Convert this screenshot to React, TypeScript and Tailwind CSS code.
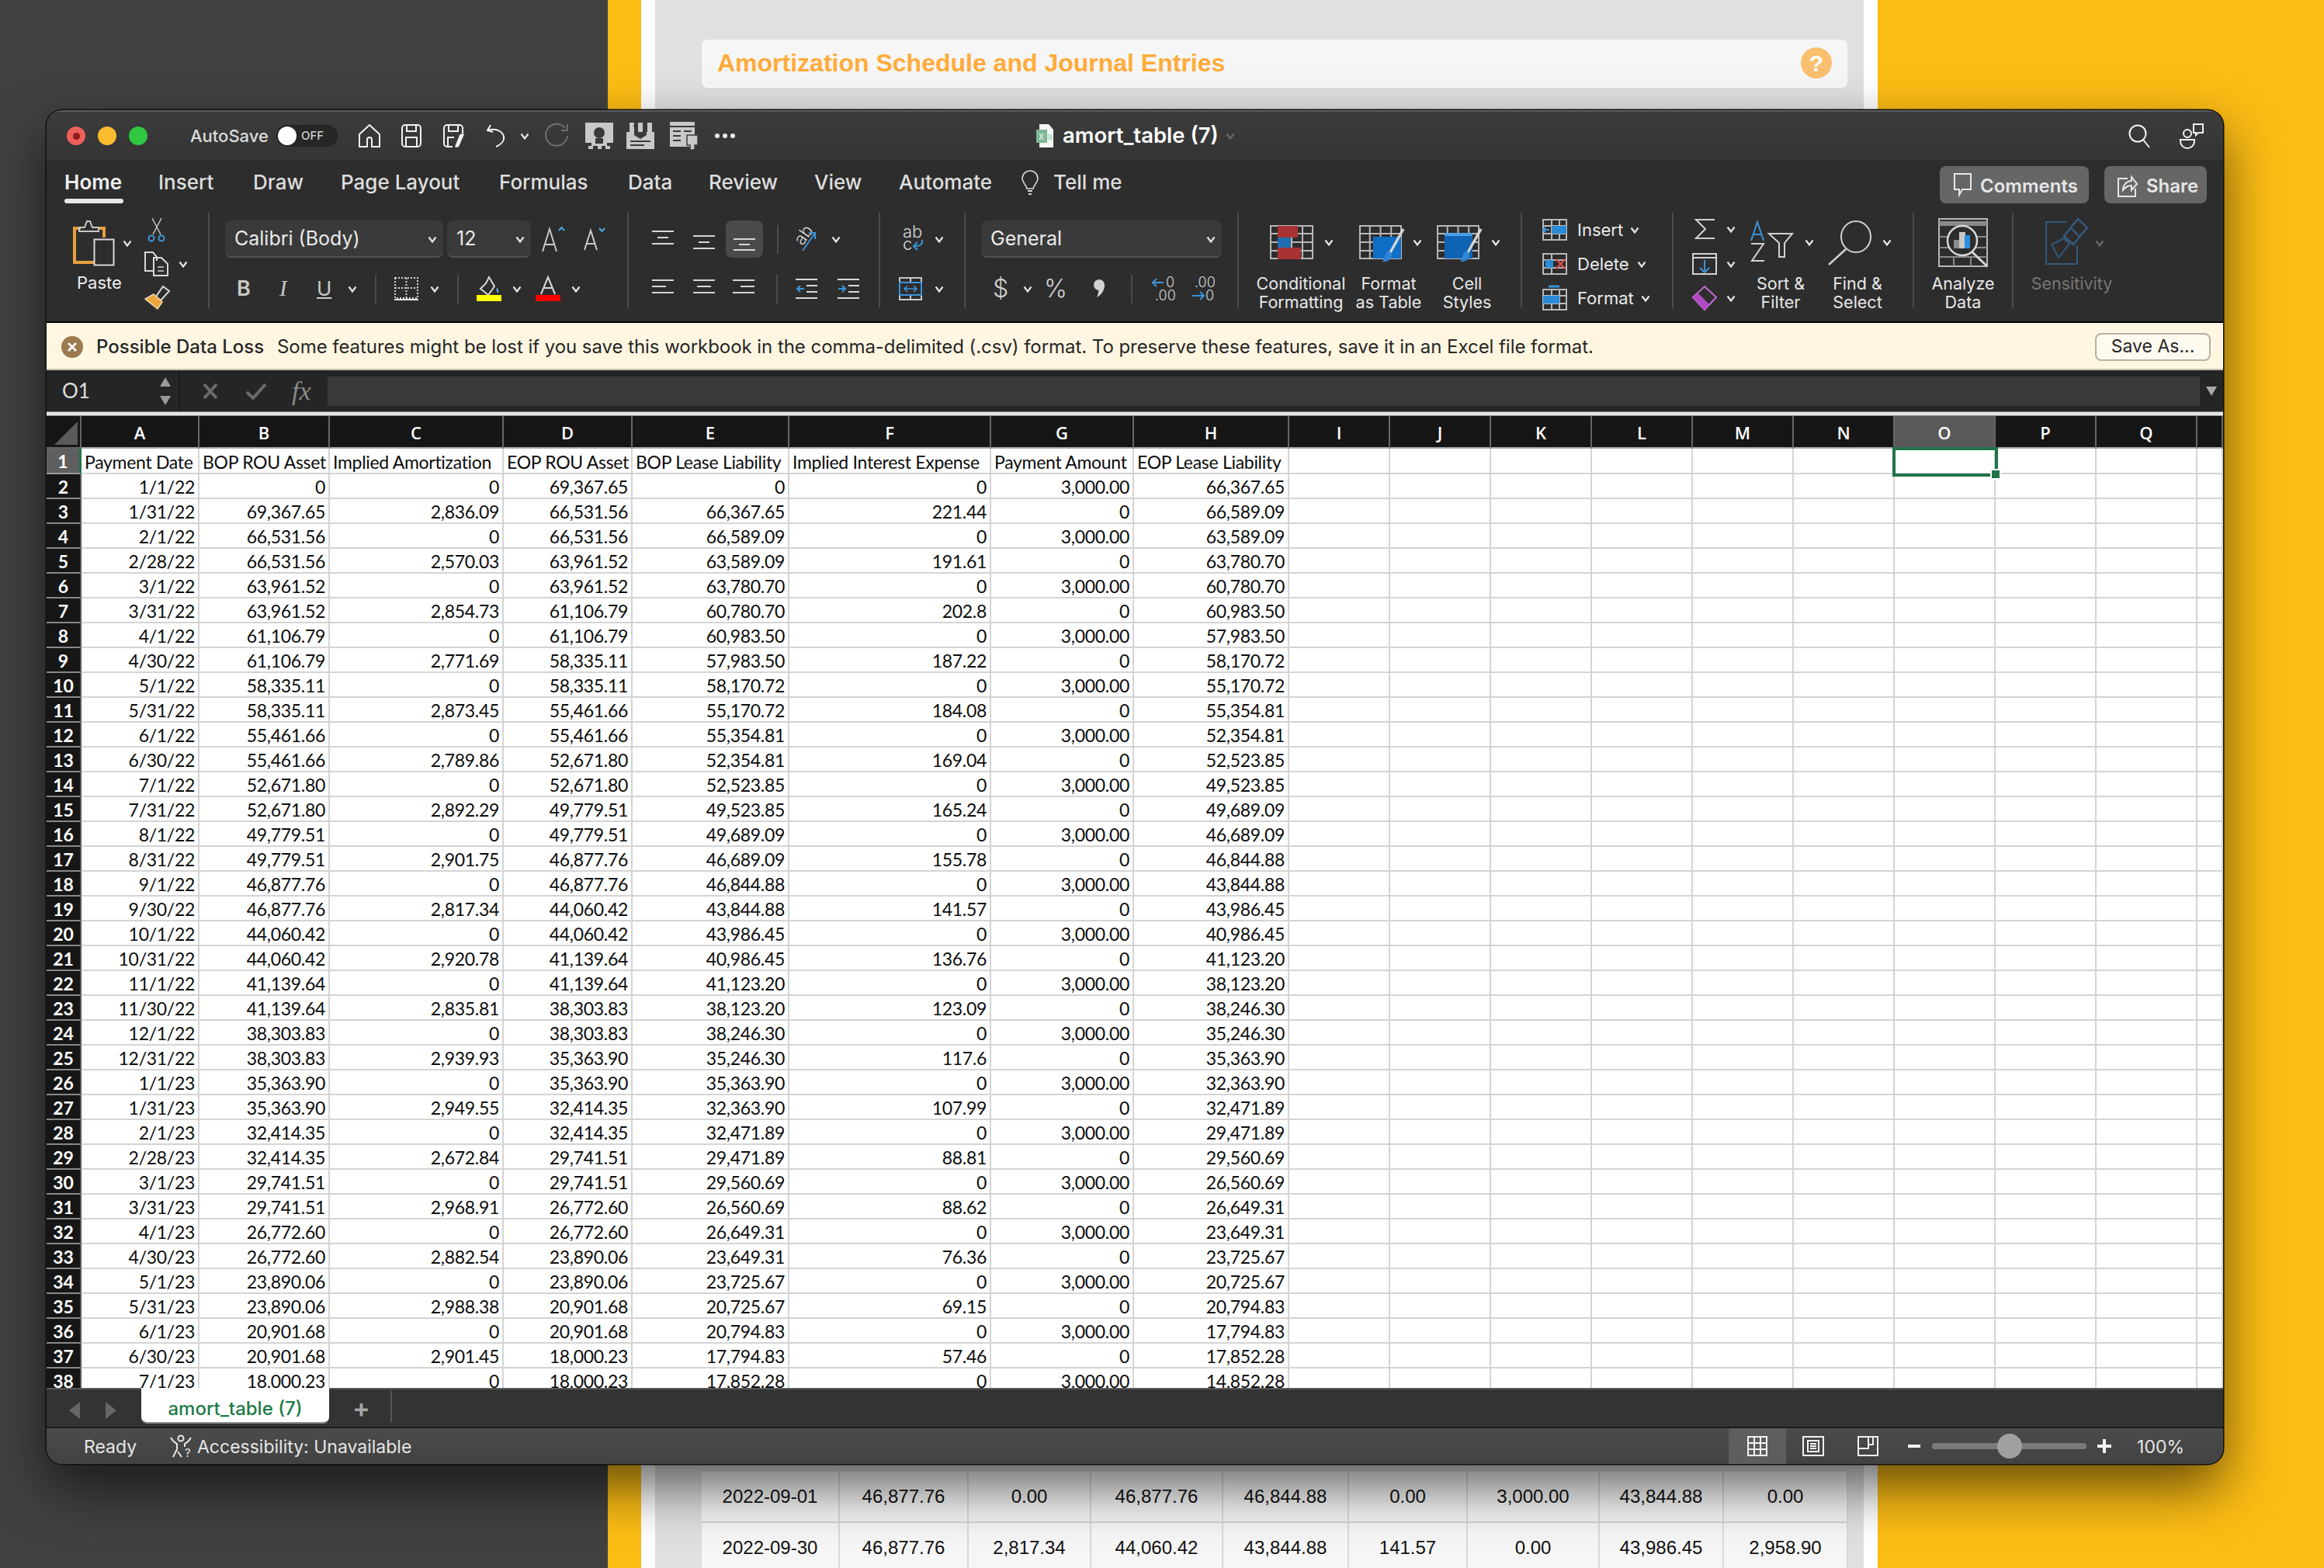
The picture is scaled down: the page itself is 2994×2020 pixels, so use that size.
import type { ReactNode } from "react";

const SANS = "[font-family:Inter,sans-serif]";

const RAW = `1/1/22|0|0|69,367.65|0|0|3,000.00|66,367.65
1/31/22|69,367.65|2,836.09|66,531.56|66,367.65|221.44|0|66,589.09
2/1/22|66,531.56|0|66,531.56|66,589.09|0|3,000.00|63,589.09
2/28/22|66,531.56|2,570.03|63,961.52|63,589.09|191.61|0|63,780.70
3/1/22|63,961.52|0|63,961.52|63,780.70|0|3,000.00|60,780.70
3/31/22|63,961.52|2,854.73|61,106.79|60,780.70|202.8|0|60,983.50
4/1/22|61,106.79|0|61,106.79|60,983.50|0|3,000.00|57,983.50
4/30/22|61,106.79|2,771.69|58,335.11|57,983.50|187.22|0|58,170.72
5/1/22|58,335.11|0|58,335.11|58,170.72|0|3,000.00|55,170.72
5/31/22|58,335.11|2,873.45|55,461.66|55,170.72|184.08|0|55,354.81
6/1/22|55,461.66|0|55,461.66|55,354.81|0|3,000.00|52,354.81
6/30/22|55,461.66|2,789.86|52,671.80|52,354.81|169.04|0|52,523.85
7/1/22|52,671.80|0|52,671.80|52,523.85|0|3,000.00|49,523.85
7/31/22|52,671.80|2,892.29|49,779.51|49,523.85|165.24|0|49,689.09
8/1/22|49,779.51|0|49,779.51|49,689.09|0|3,000.00|46,689.09
8/31/22|49,779.51|2,901.75|46,877.76|46,689.09|155.78|0|46,844.88
9/1/22|46,877.76|0|46,877.76|46,844.88|0|3,000.00|43,844.88
9/30/22|46,877.76|2,817.34|44,060.42|43,844.88|141.57|0|43,986.45
10/1/22|44,060.42|0|44,060.42|43,986.45|0|3,000.00|40,986.45
10/31/22|44,060.42|2,920.78|41,139.64|40,986.45|136.76|0|41,123.20
11/1/22|41,139.64|0|41,139.64|41,123.20|0|3,000.00|38,123.20
11/30/22|41,139.64|2,835.81|38,303.83|38,123.20|123.09|0|38,246.30
12/1/22|38,303.83|0|38,303.83|38,246.30|0|3,000.00|35,246.30
12/31/22|38,303.83|2,939.93|35,363.90|35,246.30|117.6|0|35,363.90
1/1/23|35,363.90|0|35,363.90|35,363.90|0|3,000.00|32,363.90
1/31/23|35,363.90|2,949.55|32,414.35|32,363.90|107.99|0|32,471.89
2/1/23|32,414.35|0|32,414.35|32,471.89|0|3,000.00|29,471.89
2/28/23|32,414.35|2,672.84|29,741.51|29,471.89|88.81|0|29,560.69
3/1/23|29,741.51|0|29,741.51|29,560.69|0|3,000.00|26,560.69
3/31/23|29,741.51|2,968.91|26,772.60|26,560.69|88.62|0|26,649.31
4/1/23|26,772.60|0|26,772.60|26,649.31|0|3,000.00|23,649.31
4/30/23|26,772.60|2,882.54|23,890.06|23,649.31|76.36|0|23,725.67
5/1/23|23,890.06|0|23,890.06|23,725.67|0|3,000.00|20,725.67
5/31/23|23,890.06|2,988.38|20,901.68|20,725.67|69.15|0|20,794.83
6/1/23|20,901.68|0|20,901.68|20,794.83|0|3,000.00|17,794.83
6/30/23|20,901.68|2,901.45|18,000.23|17,794.83|57.46|0|17,852.28
7/1/23|18,000.23|0|18,000.23|17,852.28|0|3,000.00|14,852.28`;

const ROWS = RAW.split("\n").map((l) => l.split("|"));
const HEAD = ["Payment Date", "BOP ROU Asset", "Implied Amortization", "EOP ROU Asset", "BOP Lease Liability", "Implied Interest Expense", "Payment Amount", "EOP Lease Liability"];
const LETTERS = ["A", "B", "C", "D", "E", "F", "G", "H", "I", "J", "K", "L", "M", "N", "O", "P", "Q", ""];
const EMPTY = Array.from({ length: 10 });

const BACK_ROWS = [
  ["2022-09-01", "46,877.76", "0.00", "46,877.76", "46,844.88", "0.00", "3,000.00", "43,844.88", "0.00"],
  ["2022-09-30", "46,877.76", "2,817.34", "44,060.42", "43,844.88", "141.57", "0.00", "43,986.45", "2,958.90"],
];

function Chev({ className = "", color = "#e4e4e4" }: { className?: string; color?: string }) {
  return (
    <svg width="12" height="9" viewBox="0 0 12 9" className={`shrink-0 ${className}`}>
      <path d="M1.5 1.5 6 7.5l4.5-6" fill="none" stroke={color} strokeWidth="2.2" />
    </svg>
  );
}

function Svg({ w, h, children, className = "" }: { w: number; h: number; children: ReactNode; className?: string }) {
  return (
    <svg width={w} height={h} viewBox={`0 0 ${w} ${h}`} fill="none" className={`shrink-0 overflow-visible ${className}`}>
      {children}
    </svg>
  );
}

function Lines({ ys, xs }: { ys: number[]; xs: [number, number][] }) {
  return (
    <Svg w={28} h={28}>
      {ys.map((y, i) => (
        <path key={i} d={`M${xs[i][0]} ${y}H${xs[i][1]}`} stroke="#d6d6d6" strokeWidth="2" />
      ))}
    </Svg>
  );
}

function Sep({ className = "" }: { className?: string }) {
  return <div className={`h-[37px] w-[2px] shrink-0 bg-[#4b4b4b] ${className}`} />;
}

function Label({ children, className = "text-[#e8e8e8]" }: { children: ReactNode; className?: string }) {
  return <div className={`whitespace-pre text-center text-[21.5px] leading-[24px] ${className}`}>{children}</div>;
}

function Brush() {
  return (
    <>
      <path d="M57 5 39 37" stroke="#d4d4d4" strokeWidth="3.5" />
      <path d="M36 34c4-1 7 2 6 6-1 5-7 8-12 7 3-3 3-10 6-13Z" fill="#2f86d4" />
    </>
  );
}

function Grid({ w, h }: { w: number; h: number }) {
  const c = w / 4;
  const r = h / 4;
  return (
    <>
      <rect x="1" y="1" width={w - 2} height={h - 2} stroke="#b8b8b8" strokeWidth="2" />
      {[1, 2, 3].map((i) => (
        <path key={i} d={`M${c * i} 1V${h - 1}M1 ${r * i}H${w - 1}`} stroke="#b8b8b8" strokeWidth="2" />
      ))}
    </>
  );
}

function TitleBar() {
  return (
    <div className="flex h-[64px] shrink-0 items-center border-t-2 border-[#5c5c5c] bg-linear-to-b from-[#3c3c3c] to-[#343434]">
      <div className="ml-[26px] flex items-center gap-[16px]">
        <div className="flex size-[24px] items-center justify-center rounded-full bg-[#ee5f5b]">
          <div className="size-[9px] rounded-full bg-[#8e1c18]" />
        </div>
        <div className="size-[24px] rounded-full bg-[#fdbb2e]" />
        <div className="size-[24px] rounded-full bg-[#2fc840]" />
      </div>
      <div className="ml-[55px] w-[99px] whitespace-nowrap text-[22px] font-medium text-[#dcdcdc]">AutoSave</div>
      <div className="ml-[12px] flex h-[28px] w-[79px] items-center rounded-full bg-[#262626] pl-[2px]">
        <div className="size-[24px] rounded-full bg-white" />
        <span className="ml-[6px] text-[15px] font-medium text-[#cfcfcf]">OFF</span>
      </div>
      <Svg w={28} h={30} className="ml-[27px]">
        <path d="M1 13 14 1l13 12v16H17v-9c0-4-6-4-6 0v9H1Z" stroke="#f2f2f2" strokeWidth="2" />
      </Svg>
      <Svg w={26} h={30} className="ml-[27px]">
        <path d="M1 5a4 4 0 0 1 4-4h16a4 4 0 0 1 4 4v20a4 4 0 0 1-4 4H5a4 4 0 0 1-4-4Z" stroke="#f2f2f2" strokeWidth="2" />
        <path d="M7 1v8h12V1M6 29V17h14v12" stroke="#f2f2f2" strokeWidth="2" />
      </Svg>
      <Svg w={29} h={30} className="ml-[28px]">
        <path d="M12 29H5a4 4 0 0 1-4-4V5a4 4 0 0 1 4-4h16a4 4 0 0 1 4 4v7M7 1v8h12V1M6 29V17h8" stroke="#f2f2f2" strokeWidth="2" />
        <path d="M27 13 20 29c-2 1-4 1-5 0l6-15c2-2 4-2 6-1Z" fill="#f2f2f2" />
      </Svg>
      <Svg w={26} h={30} className="ml-[26px]">
        <path d="M6 1 2 8l7 2M2 8c10-3 19 0 21 8 1 5-3 10-10 13" stroke="#f2f2f2" strokeWidth="2" />
      </Svg>
      <Chev className="ml-[18px]" />
      <Svg w={31} h={32} className="ml-[20px]">
        <path d="M26 6a14 14 0 1 0 3 10M29 1v8h-8" stroke="#6f6f6f" strokeWidth="2" />
      </Svg>
      <Svg w={36} h={34} className="ml-[21px]">
        <rect y="0" width="36" height="26" fill="#c8c8c8" />
        <circle cx="18" cy="13" r="7" fill="#3a3a3a" />
        <path d="M8 26h20v4H8ZM4 30h6v4H4ZM16 28h5v6h-5ZM26 30h6v4h-6Z" fill="#c8c8c8" />
        <path d="M13 20h10v7H13Z" fill="#3a3a3a" />
      </Svg>
      <Svg w={36} h={34} className="ml-[17px]">
        <rect y="12" width="36" height="22" fill="#c8c8c8" />
        <path d="M4 0h6v14H4ZM15 0h6v18h-6ZM27 0h6v14h-6Z" fill="#c8c8c8" />
        <path d="M9 4h5M21 4h5M5 24h26M5 29h18" stroke="#3a3a3a" strokeWidth="2" />
        <path d="M10 12h16v4l-8 5-8-5Z" fill="#3a3a3a" />
      </Svg>
      <Svg w={36} h={36} className="ml-[20px]">
        <rect x="0" y="0" width="32" height="32" fill="#c8c8c8" />
        <path d="M0 6h32M4 12h10M18 12h10M4 18h10M4 24h10" stroke="#3a3a3a" strokeWidth="2" />
        <path d="M22 17h14v13h-4v6h-6v-6h-4Z" fill="#c8c8c8" stroke="#3a3a3a" strokeWidth="1.5" />
      </Svg>
      <div className="ml-[22px] flex gap-[4px]">
        <div className="size-[6px] rounded-full bg-[#f0f0f0]" />
        <div className="size-[6px] rounded-full bg-[#f0f0f0]" />
        <div className="size-[6px] rounded-full bg-[#f0f0f0]" />
      </div>
      <Svg w={22} h={30} className="ml-[388px]">
        <path d="M4 0h12l6 7v23H4Z" fill="#f4f4f4" />
        <rect y="7" width="14" height="17" fill="#7fb796" />
        <text x="3" y="20" fontSize="13" fill="#eaf5ee" fontFamily="Inter">x</text>
        <text x="14" y="20" fontSize="12" fill="#8fd3a9" fontFamily="Inter">a</text>
      </Svg>
      <div className="ml-[12px] w-[201px] whitespace-nowrap text-[27.5px] font-semibold text-white">amort_table (7)</div>
      <Chev className="ml-[9px]" color="#6a6a6a" />
      <Svg w={28} h={30} className="ml-auto">
        <circle cx="12" cy="12" r="10.5" stroke="#f2f2f2" strokeWidth="2" />
        <path d="m19 20 8 10" stroke="#f2f2f2" strokeWidth="2" />
      </Svg>
      <Svg w={32} h={32} className="ml-[38px] mr-[24px]">
        <circle cx="10" cy="13" r="5" stroke="#f2f2f2" strokeWidth="2" />
        <path d="M1 21h18v2a9 9 0 0 1-18 0Z" stroke="#f2f2f2" strokeWidth="2" />
        <path d="M18 1h12v11h-6l-3 3v-3h-3Z" stroke="#f2f2f2" strokeWidth="2" />
      </Svg>
    </div>
  );
}

function Tabs() {
  return (
    <div className="flex h-[68px] items-start pl-[23px] pt-[13px] text-[26px] font-medium leading-[32px] text-[#dedede]">
      <div className="w-[121px] font-semibold text-[#f0f0f0]">
        Home
        <div className="mt-[5px] h-[6px] w-[76px] rounded-full bg-[#e6e6e6]" />
      </div>
      <div className="w-[122px]">Insert</div>
      <div className="w-[113px]">Draw</div>
      <div className="w-[204px]">Page Layout</div>
      <div className="w-[166px]">Formulas</div>
      <div className="w-[104px]">Data</div>
      <div className="w-[136px]">Review</div>
      <div className="w-[109px]">View</div>
      <div className="w-[158px]">Automate</div>
      <Svg w={22} h={32}>
        <path d="M11 1a10 10 0 0 0-10 10c0 5 5 8 6 13h8c1-5 6-8 6-13A10 10 0 0 0 11 1Z" stroke="#d6d6d6" strokeWidth="1.6" />
        <path d="M8 27h6M9 31h4" stroke="#d6d6d6" strokeWidth="2" />
      </Svg>
      <div className="ml-[19px] whitespace-nowrap">Tell me</div>
      <div className="ml-auto mr-[21px] mt-[-5px] flex gap-[20px] text-[24px] font-semibold text-[#e6e6e6]">
        <div className="flex h-[48px] w-[192px] items-center rounded-[8px] bg-[#666666] pl-[18px]">
          <Svg w={24} h={30}>
            <path d="M1 1h21v20H11l-4 7v-7H1Z" stroke="#e6e6e6" strokeWidth="2" />
          </Svg>
          <span className="ml-[10px] pt-[3px]">Comments</span>
        </div>
        <div className="flex h-[48px] w-[132px] items-center rounded-[8px] bg-[#666666] pl-[17px]">
          <Svg w={26} h={32}>
            <path d="M13 8H1v23h22V21" stroke="#e6e6e6" strokeWidth="2" />
            <path d="M7 23c0-7 5-12 11-12V6l7 9-7 8v-6c-4 0-8 2-11 6Z" stroke="#e6e6e6" strokeWidth="2" />
          </Svg>
          <span className="ml-[11px] pt-[3px]">Share</span>
        </div>
      </div>
    </div>
  );
}

function Select({ w, children }: { w: string; children: ReactNode }) {
  return (
    <div className={`flex h-[48px] items-center justify-between rounded-[8px] border-b-2 border-[#525252] bg-[#3a3a3a] pl-[12px] pr-[8px] pt-[2px] text-[25px] text-[#eaeaea] ${w}`}>
      <span className="whitespace-nowrap">{children}</span>
      <Chev />
    </div>
  );
}

function Clipboard() {
  return (
    <div className="flex h-full w-[210px] shrink-0 border-r-2 border-[#4b4b4b]">
      <div className="ml-[34px] mt-[10px] w-[54px]">
        <Svg w={54} h={59}>
          <path d="M10 10H2v44h25M33 10h7v12" stroke="#e9a03c" strokeWidth="4" />
          <path d="M8 14V9h7l3-8 4 0 3 8h8v5Z" stroke="#c8c8c8" strokeWidth="2" />
          <rect x="27.5" y="24.5" width="25" height="33" stroke="#d8d8d8" strokeWidth="2" />
        </Svg>
        <div className="ml-[5px] mt-[9px] text-[22px] leading-[24px] text-[#eeeeee]">Paste</div>
      </div>
      <Chev className="ml-[10px] mt-[35px]" />
      <div className="ml-[16px] flex flex-col">
        <Svg w={32} h={32} className="mt-[6px]">
          <path d="M10 1 21 22M22 1 11 22" stroke="#c8c8c8" strokeWidth="1.5" />
          <circle cx="9" cy="27" r="3.5" stroke="#3b94d9" strokeWidth="2" />
          <circle cx="22" cy="27" r="3.5" stroke="#3b94d9" strokeWidth="2" />
        </Svg>
        <div className="mt-[12px] flex items-center">
          <Svg w={32} h={32}>
            <path d="M12 25H1V1h10l5 6v5" stroke="#d8d8d8" strokeWidth="2" />
            <path d="M12 8h10l8 8v15H12Z" stroke="#d8d8d8" strokeWidth="2" />
            <path d="M17 20h8M17 25h8" stroke="#d8d8d8" strokeWidth="1.5" />
          </Svg>
          <Chev className="ml-[12px]" />
        </div>
        <Svg w={32} h={30} className="mt-[12px]">
          <path d="M24 1 32 7 21 19l-6-5Z" stroke="#d8d8d8" strokeWidth="2" />
          <path d="M12 11 23 21l-6 9L1 17Z" fill="#eda63e" stroke="#f0d9ac" strokeWidth="1.5" />
        </Svg>
      </div>
    </div>
  );
}

function FontGroup() {
  return (
    <div className="h-full w-[540px] shrink-0 border-r-2 border-[#4b4b4b]">
      <div className="ml-[20px] mt-[10px] flex items-center">
        <Select w="w-[281px]">Calibri (Body)</Select>
        <div className="ml-[5px]"><Select w="w-[108px]">12</Select></div>
        <Svg w={29} h={34} className="ml-[14px]">
          <path d="M1 33 10 4l9 29M4 24h12" stroke="#c9c9c9" strokeWidth="2" />
          <path d="m22 6 3.5-4 3.5 4" stroke="#4ba3e3" strokeWidth="2" />
        </Svg>
        <Svg w={27} h={30} className="ml-[25px]">
          <path d="M1 29 9 4l8 25M4 21h10" stroke="#c9c9c9" strokeWidth="2" />
          <path d="m20 1 3.5 4L27 1" stroke="#4ba3e3" strokeWidth="2" />
        </Svg>
      </div>
      <div className="mt-[24px] flex h-[32px] items-center pl-[35px]">
        <span className="w-[17px] text-[27px] font-semibold text-[#c9c9c9]">B</span>
        <span className="ml-[38px] w-[12px] [font-family:'Liberation_Serif',serif] text-[29px] italic text-[#c9c9c9]">I</span>
        <span className="ml-[36px] w-[18px] text-[26px] leading-[26px] text-[#c9c9c9] underline underline-offset-2">U</span>
        <Chev className="ml-[22px]" />
        <Sep className="ml-[23px]" />
        <Svg w={31} h={30} className="ml-[23px]">
          <rect x="1" y="1" width="29" height="26" stroke="#d4d4d4" strokeWidth="2" strokeDasharray="2 2" />
          <path d="M15.5 1v26M1 14h29" stroke="#d4d4d4" strokeWidth="2" strokeDasharray="2 2" />
          <path d="M0 29h31" stroke="#e8e8e8" strokeWidth="2" />
        </Svg>
        <Chev className="ml-[15px]" />
        <Sep className="ml-[23px]" />
        <Svg w={32} h={32} className="ml-[23px]">
          <path d="M16 1 23 13l-8 11-10-8 7-7Z" stroke="#d8d8d8" strokeWidth="2" />
          <path d="M26 14c2 3 3 5 2 7-2 1-3-4-2-7Z" fill="#62aee8" />
          <rect y="24" width="32" height="8" fill="#ffff00" />
        </Svg>
        <Chev className="ml-[14px]" />
        <Svg w={32} h={32} className="ml-[18px]">
          <path d="M7 23 16 1l9 22M10 15h12" stroke="#d8d8d8" strokeWidth="2" />
          <rect y="24" width="32" height="8" fill="#ff0000" />
        </Svg>
        <Chev className="ml-[14px]" />
      </div>
    </div>
  );
}

function AlignGroup() {
  const h: [number, number][] = [[0, 28], [7, 21], [0, 28]];
  return (
    <div className="h-full w-[324px] shrink-0 border-r-2 border-[#4b4b4b]">
      <div className="ml-[30px] mt-[10px] flex h-[48px] items-center">
        <Lines ys={[4, 12, 20]} xs={h} />
        <div className="ml-[25px]"><Lines ys={[10, 18, 26]} xs={h} /></div>
        <div className="ml-[14px] flex h-[48px] w-[48px] items-center justify-center rounded-[8px] bg-[#4a4a4a]">
          <div className="mt-[12px]"><Lines ys={[8, 15, 22]} xs={h} /></div>
        </div>
        <Sep className="ml-[18px]" />
        <Svg w={33} h={32} className="ml-[22px]">
          <text x="1" y="18" fontSize="22" fill="#d8d8d8" fontFamily="Inter" fontWeight="300" transform="rotate(-55 12 14)">ab</text>
          <path d="m9 31 16-23m-8 0h8v8" stroke="#3b94d9" strokeWidth="2" />
        </Svg>
        <Chev className="ml-[13px]" />
      </div>
      <div className="ml-[30px] mt-[24px] flex h-[32px] items-center">
        <Lines ys={[3, 11, 19]} xs={[[0, 28], [0, 18], [0, 28]]} />
        <div className="ml-[25px]"><Lines ys={[3, 11, 19]} xs={[[0, 28], [5, 23], [0, 28]]} /></div>
        <div className="ml-[23px]"><Lines ys={[3, 11, 19]} xs={[[0, 28], [10, 28], [0, 28]]} /></div>
        <Sep className="ml-[28px]" />
        <Svg w={29} h={26} className="ml-[23px]">
          <path d="M0 1h28M14 9h14M14 17h14M0 25h28" stroke="#d8d8d8" strokeWidth="2" />
          <path d="M11 13H2m4-4-4 4 4 4" stroke="#3b94d9" strokeWidth="2" />
        </Svg>
        <Svg w={29} h={26} className="ml-[24px]">
          <path d="M1 1h28M15 9h14M15 17h14M1 25h28" stroke="#d8d8d8" strokeWidth="2" />
          <path d="M2 13h9m-4-4 4 4-4 4" stroke="#3b94d9" strokeWidth="2" />
        </Svg>
      </div>
    </div>
  );
}

function WrapGroup() {
  return (
    <div className="h-full w-[110px] shrink-0 border-r-2 border-[#4b4b4b]">
      <div className="ml-[29px] mt-[10px] flex h-[48px] items-center">
        <Svg w={27} h={34}>
          <text x="0" y="15" fontSize="22" fill="#d8d8d8" fontFamily="Inter" fontWeight="300">ab</text>
          <text x="0" y="31" fontSize="22" fill="#d8d8d8" fontFamily="Inter" fontWeight="300">c</text>
          <path d="M25 18c1 6-2 8-10 8m4-5-5 5 5 5" stroke="#3b94d9" strokeWidth="2" />
        </Svg>
        <Chev className="ml-[14px]" />
      </div>
      <div className="ml-[24px] mt-[24px] flex h-[32px] items-center">
        <Svg w={30} h={30}>
          <rect x="1" y="1" width="28" height="28" stroke="#c8c8c8" strokeWidth="2" />
          <path d="M15 1v6M15 23v6" stroke="#c8c8c8" strokeWidth="2" />
          <rect x="1" y="7" width="28" height="16" stroke="#3b94d9" strokeWidth="2" />
          <path d="M7 15h16m-12-4-4 4 4 4m8-8 4 4-4 4" stroke="#3b94d9" strokeWidth="1.5" />
        </Svg>
        <Chev className="ml-[16px]" />
      </div>
    </div>
  );
}

function NumberGroup() {
  return (
    <div className="h-full w-[352px] shrink-0 border-r-2 border-[#4b4b4b]">
      <div className="ml-[20px] mt-[10px]"><Select w="w-[310px]">General</Select></div>
      <div className="mt-[24px] flex h-[32px] items-center pl-[35px] text-[#d2d2d2]">
        <span className="w-[16px] text-[32px] font-light leading-[32px]">$</span>
        <Chev className="ml-[23px]" />
        <span className="ml-[15px] w-[34px] text-[32px] font-light leading-[32px]">%</span>
        <Svg w={16} h={32} className="ml-[29px]">
          <circle cx="8" cy="11" r="7" fill="#d2d2d2" />
          <path d="M15 11c0 7-4 13-10 16 2-5 3-9 2-13Z" fill="#d2d2d2" />
        </Svg>
        <Sep className="ml-[33px]" />
        <Svg w={30} h={32} className="ml-[24px]">
          <path d="M16 8H2m5-5-5 5 5 5" stroke="#3b94d9" strokeWidth="2" />
          <text x="19" y="14" fontSize="18" fill="#d2d2d2" fontFamily="Inter" fontWeight="300">0</text>
          <text x="5" y="31" fontSize="18" fill="#d2d2d2" fontFamily="Inter" fontWeight="300">.00</text>
        </Svg>
        <Svg w={30} h={32} className="ml-[21px]">
          <text x="5" y="14" fontSize="18" fill="#d2d2d2" fontFamily="Inter" fontWeight="300">.00</text>
          <path d="M2 25h15m-5-5 5 5-5 5" stroke="#3b94d9" strokeWidth="2" />
          <text x="19" y="31" fontSize="18" fill="#d2d2d2" fontFamily="Inter" fontWeight="300">0</text>
        </Svg>
      </div>
    </div>
  );
}

function StylesGroup() {
  return (
    <div className="flex h-full w-[365px] shrink-0 border-r-2 border-[#4b4b4b] pl-[20px]">
      <div className="w-[120px]">
        <div className="mt-[16px] flex h-[63px] items-start pl-[20px]">
          <Svg w={56} h={44}>
            <Grid w={56} h={44} />
            <rect x="10" y="1" width="26" height="15" fill="#a93232" />
            <rect x="10" y="16" width="17" height="13" fill="#1f6fb0" />
            <rect x="10" y="29" width="30" height="15" fill="#a93232" />
          </Svg>
          <Chev className="ml-[14px] mt-[18px]" />
        </div>
        <Label>{"Conditional\nFormatting"}</Label>
      </div>
      <div className="w-[106px]">
        <div className="mt-[16px] flex h-[63px] items-start pl-[15px]">
          <Svg w={60} h={54}>
            <Grid w={55} h={44} />
            <rect x="18" y="15" width="36" height="28" fill="#0f6fc6" />
            <Brush />
          </Svg>
          <Chev className="ml-[9px] mt-[18px]" />
        </div>
        <Label>{"Format\nas Table"}</Label>
      </div>
      <div className="w-[96px]">
        <div className="mt-[16px] flex h-[63px] items-start pl-[9px]">
          <Svg w={60} h={54}>
            <Grid w={55} h={44} />
            <rect x="10" y="10" width="36" height="33" fill="#0f64b4" />
            <rect x="10" y="10" width="36" height="4" fill="#4ea2e6" />
            <Brush />
          </Svg>
          <Chev className="ml-[10px] mt-[18px]" />
        </div>
        <Label>{"Cell\nStyles"}</Label>
      </div>
    </div>
  );
}

function CellRow({ label, tw, children }: { label: string; tw: string; children: ReactNode }) {
  return (
    <div className="flex h-[44px] items-center pl-[26px]">
      {children}
      <span className={`ml-[13px] text-[22px] text-[#eaeaea] ${tw}`}>{label}</span>
      <Chev />
    </div>
  );
}

function CellsGroup() {
  return (
    <div className="h-full w-[195px] shrink-0 border-r-2 border-[#4b4b4b]">
      <CellRow label="Insert" tw="w-[68px]">
        <Svg w={32} h={28}>
          <path d="M1 1h30v26H1ZM1 9h30M1 19h30M12 1v26M22 1v26" stroke="#b8b8b8" strokeWidth="2" />
          <rect x="12" y="9" width="19" height="10" fill="#2b8ad8" />
          <path d="M9 14H1m3-3-3 3 3 3" stroke="#3b94d9" strokeWidth="2" />
        </Svg>
      </CellRow>
      <CellRow label="Delete" tw="w-[77px]">
        <Svg w={32} h={28}>
          <path d="M1 1h30v26H1ZM1 9h30M1 19h30M12 1v26" stroke="#b8b8b8" strokeWidth="2" />
          <rect x="4" y="9" width="10" height="10" fill="#2b8ad8" />
          <path d="m18 8 11 12m0-12L18 20" stroke="#e24a4a" strokeWidth="2.4" />
        </Svg>
      </CellRow>
      <CellRow label="Format" tw="w-[82px]">
        <Svg w={32} h={32}>
          <path d="M1 5h30v26H1ZM1 13h30M1 23h30M12 5v26M22 5v26" stroke="#b8b8b8" strokeWidth="2" />
          <rect x="1" y="13" width="21" height="10" fill="#2b8ad8" />
          <path d="M8 1h14" stroke="#3b94d9" strokeWidth="3" />
        </Svg>
      </CellRow>
    </div>
  );
}

function EditGroup() {
  return (
    <div className="flex h-full w-[310px] shrink-0 border-r-2 border-[#4b4b4b] pl-[24px]">
      <div className="w-[57px]">
        <div className="flex h-[44px] items-center pb-[2px]">
          <Svg w={32} h={28}>
            <path d="M29 2H5l12 12L5 26h24" stroke="#d2d2d2" strokeWidth="2" />
          </Svg>
          <Chev className="ml-[12px]" />
        </div>
        <div className="flex h-[44px] items-center">
          <Svg w={32} h={28}>
            <rect x="1" y="1" width="30" height="26" stroke="#d2d2d2" strokeWidth="2" />
            <path d="M1 6h30" stroke="#d2d2d2" strokeWidth="2" />
            <path d="M16 9v15m-6-5 6 6 6-6" stroke="#3b94d9" strokeWidth="2" />
          </Svg>
          <Chev className="ml-[12px]" />
        </div>
        <div className="flex h-[44px] items-center">
          <Svg w={32} h={32}>
            <path d="M16 1 31 15 16 31 1 15Z" stroke="#c46bd6" strokeWidth="2" />
            <path d="M8 10 22 24 16 31 1 15Z" fill="#b049c4" />
          </Svg>
          <Chev className="ml-[12px]" />
        </div>
      </div>
      <div className="w-[114px]">
        <div className="mt-[10px] flex h-[69px] items-start pl-[18px]">
          <Svg w={56} h={54}>
            <path d="M1 26 9 2l8 24M4 18h10" stroke="#3b94d9" strokeWidth="2" />
            <path d="M1 30h16L2 52h16" stroke="#d2d2d2" strokeWidth="2" />
            <path d="M24 17h30L44 29v18h-7V29Z" stroke="#d2d2d2" strokeWidth="2" />
          </Svg>
          <Chev className="ml-[14px] mt-[24px]" />
        </div>
        <Label>{"Sort &\nFilter"}</Label>
      </div>
      <div className="w-[84px]">
        <div className="mt-[10px] flex h-[69px] items-start pl-[3px]">
          <Svg w={57} h={58}>
            <ellipse cx="37" cy="21" rx="19" ry="20" stroke="#d2d2d2" strokeWidth="2" />
            <path d="M24 37 2 57" stroke="#d2d2d2" strokeWidth="2.4" />
          </Svg>
          <Chev className="ml-[14px] mt-[24px]" />
        </div>
        <Label>{"Find &\nSelect"}</Label>
      </div>
    </div>
  );
}

function AnalyzeGroup() {
  return (
    <div className="flex h-full w-[126px] shrink-0 flex-col items-center">
      <div className="mt-[7px] h-[72px] shrink-0">
        <Svg w={64} h={63}>
          <rect x="1" y="1" width="62" height="61" stroke="#b8b8b8" strokeWidth="2" />
          <rect x="1" y="4" width="62" height="6" fill="#8a8a8a" />
          <path d="M1 24h62M1 38h62M1 50h62M20 50v12M42 50v12" stroke="#8a8a8a" strokeWidth="2" />
          <circle cx="31" cy="29" r="19" fill="#2d2d2d" stroke="#d8d8d8" strokeWidth="2.5" />
          <rect x="20" y="28" width="8" height="11" fill="#8d8d8d" />
          <rect x="27" y="18" width="8" height="21" fill="#c8c8c8" />
          <rect x="34" y="22" width="7" height="17" fill="#2f8ee0" />
          <path d="m44 44 19 18" stroke="#d8d8d8" strokeWidth="3" />
        </Svg>
      </div>
      <Label>{"Analyze\nData"}</Label>
    </div>
  );
}

function SensitivityGroup() {
  return (
    <div className="h-full w-[150px] shrink-0 border-l-2 border-[#4b4b4b] pl-[2px]">
      <div className="mt-[7px] flex h-[72px] items-start pl-[39px]">
        <Svg w={54} h={60}>
          <path d="M28 5H1v54h40V36" stroke="#35597a" strokeWidth="2" />
          <path d="M24 23 42 1l12 11-18 22ZM32 12l12 12" stroke="#35597a" strokeWidth="2.5" />
          <path d="M8 36 24 28l7 7-14 18Z" stroke="#35597a" strokeWidth="2" transform="translate(0 -2)" />
        </Svg>
        <Chev className="ml-[10px] mt-[28px]" color="#6a6a6a" />
      </div>
      <Label className="text-[#777777]">Sensitivity</Label>
    </div>
  );
}

function Ribbon() {
  return (
    <div className="h-[210px] shrink-0 border-b-2 border-black bg-[#2d2d2d]">
      <Tabs />
      <div className="flex h-[123px]">
        <Clipboard />
        <FontGroup />
        <AlignGroup />
        <WrapGroup />
        <NumberGroup />
        <StylesGroup />
        <CellsGroup />
        <EditGroup />
        <AnalyzeGroup />
        <SensitivityGroup />
      </div>
    </div>
  );
}

function Banner() {
  return (
    <div className="flex h-[61px] shrink-0 items-center border-b-2 border-[#c9c3b2] bg-[#fff6e2] pl-[19px] pr-[16px] pt-[2px] text-[24px] text-[#262626]">
      <div className="flex size-[28px] items-center justify-center rounded-full bg-[#9c7a4f]">
        <svg width="14" height="14" viewBox="0 0 14 14">
          <path d="m2 2 10 10M12 2 2 12" stroke="#fff" strokeWidth="2.6" />
        </svg>
      </div>
      <span className="ml-[17px] w-[233px] whitespace-nowrap font-medium">Possible Data Loss</span>
      <span className="whitespace-nowrap tracking-[-0.05px]">Some features might be lost if you save this workbook in the comma-delimited (.csv) format. To preserve these features, save it in an Excel file format.</span>
      <div className="ml-auto flex h-[36px] w-[149px] items-center justify-center rounded-[8px] border-2 border-[#b8b19e] bg-[#fffaf0] text-[23px]">Save As...</div>
    </div>
  );
}

function FormulaBar() {
  return (
    <div className="flex h-[53px] shrink-0 items-center bg-[#252525]">
      <div className="flex h-full w-[172px] items-center justify-between border-r-2 border-[#1a1a1a] pl-[20px] pr-[10px]">
        <span className="[font-family:Lato,sans-serif] text-[26px] text-[#dedede]">O1</span>
        <div className="flex flex-col gap-[12px]">
          <div className="size-0 border-x-[7px] border-b-[12px] border-x-transparent border-b-[#9a9a9a]" />
          <div className="size-0 border-x-[7px] border-t-[12px] border-x-transparent border-t-[#9a9a9a]" />
        </div>
      </div>
      <svg width="20" height="22" viewBox="0 0 20 22" className="ml-[29px] shrink-0">
        <path d="m2 2 16 18M18 2 2 20" stroke="#6a6a6a" strokeWidth="4" />
      </svg>
      <svg width="28" height="22" viewBox="0 0 28 22" className="ml-[35px] shrink-0">
        <path d="m2 12 8 8L26 2" fill="none" stroke="#6a6a6a" strokeWidth="4" />
      </svg>
      <span className="ml-[32px] w-[46px] [font-family:'Liberation_Serif',serif] text-[34px] italic leading-none text-[#8a8a8a]">fx</span>
      <div className="h-[38px] w-[2412px] bg-[#3a3a3a]" />
      <div className="ml-[8px] size-0 border-x-[7px] border-t-[12px] border-x-transparent border-t-[#a8a8a8]" />
    </div>
  );
}

function Sheet() {
  return (
    <div className="grid h-[1252px] shrink-0 grid-cols-[45px_152px_168px_224px_166px_202px_260px_184px_200px_repeat(9,130px)_33px] grid-rows-[42px_33px] auto-rows-[32px] overflow-hidden bg-white [font-family:Lato,sans-serif] text-[23px] tracking-[-0.3px] text-[#0c0c0c]">
      <div className="flex items-end justify-end border-r-2 border-b-2 border-[#666666] bg-[#161616] p-[3px]">
        <div className="size-0 border-b-[30px] border-l-[30px] border-b-[#5a5a5a] border-l-transparent" />
      </div>
      {LETTERS.map((l) => (
        <div
          key={l}
          className={`flex items-center justify-center border-r-2 border-b-2 border-r-[#666666] border-b-[#aaaaaa] pt-[3px] text-[22px] font-semibold tracking-normal text-white [font-family:'Open_Sans',sans-serif] ${l === "O" ? "bg-[#595959]" : "bg-[#161616]"}`}
        >
          {l}
        </div>
      ))}

      <div className="flex items-center justify-center border-r-[3px] border-b-2 border-r-[#217346] border-b-[#999999] bg-[#5f5f5f] pt-[2px] font-bold tracking-normal text-white">1</div>
      {HEAD.map((h) => (
        <div key={h} className="overflow-hidden whitespace-nowrap border-r-2 border-b-2 border-[#d4d4d4] pl-[4px] leading-[34px] tracking-[-0.3px]">{h}</div>
      ))}
      {EMPTY.map((_, i) =>
        i === 6 ? (
          <div key={i} className="relative z-10 border-r-2 border-b-2 border-[#d4d4d4]">
            <div className="absolute -left-[3px] -top-[2px] h-[38px] w-[136px] border-4 border-[#217346]" />
            <div className="absolute left-[125px] top-[28px] size-[10px] bg-[#217346] outline-2 outline-white" />
          </div>
        ) : (
          <div key={i} className="border-r-2 border-b-2 border-[#d4d4d4]" />
        ),
      )}

      {ROWS.map((row, r) => (
        <div key={r} className="contents">
          <div className="flex items-center justify-center border-r-2 border-b-2 border-r-[#555555] border-b-[#888888] bg-[#161616] pt-[2px] font-bold tracking-normal text-white">{r + 2}</div>
          {row.map((v, c) => (
            <div key={c} className="overflow-hidden whitespace-nowrap border-r-2 border-b-2 border-[#d4d4d4] pr-[4px] text-right leading-[33px]">{v}</div>
          ))}
          {EMPTY.map((_, i) => (
            <div key={i} className="border-r-2 border-b-2 border-[#d4d4d4]" />
          ))}
        </div>
      ))}
    </div>
  );
}

function SheetTabs() {
  return (
    <div className="flex h-[52px] shrink-0 items-start border-t-2 border-b-2 border-t-[#5a5a5a] border-b-[#1c1c1c] bg-[#333333]">
      <div className="ml-[29px] mt-[16px] size-0 border-y-[11px] border-r-[14px] border-y-transparent border-r-[#666666]" />
      <div className="ml-[33px] mt-[16px] size-0 border-y-[11px] border-l-[14px] border-y-transparent border-l-[#666666]" />
      <div className="z-10 ml-[32px] mt-[-2px] flex h-[46px] w-[242px] items-center justify-center rounded-b-[8px] border-b-2 border-[#8a8a8a] bg-white pt-[10px] text-[24px] font-medium text-[#1e7b45]">amort_table (7)</div>
      <span className="ml-[30px] mt-[4px] text-[34px] font-semibold leading-[40px] text-[#a5a5a5]">+</span>
      <div className="ml-[26px] mt-[2px] h-[40px] w-[2px] bg-[#565656]" />
    </div>
  );
}

function StatusBar() {
  return (
    <div className="flex h-[46px] shrink-0 items-center bg-linear-to-b from-[#4b4b4b] to-[#424242] text-[23px] text-[#e6e6e6]">
      <span className="ml-[48px] w-[110px] pt-[3px]">Ready</span>
      <Svg w={31} h={30}>
        <circle cx="15" cy="5" r="3.5" stroke="#e6e6e6" strokeWidth="2" />
        <path d="M2 4c4 7 7 7 8 8v7l-5 10M28 4c-4 7-7 7-8 8v4M11 22l5 7" stroke="#e6e6e6" strokeWidth="2" />
        <text x="20" y="29" fontSize="15" fill="#e6e6e6" fontFamily="Inter">?</text>
      </Svg>
      <span className="ml-[5px] w-[285px] whitespace-nowrap pt-[3px]">Accessibility: Unavailable</span>
      <div className="ml-auto flex h-[46px] w-[74px] items-center justify-center bg-[#5e5e5e]">
        <Svg w={26} h={26}>
          <path d="M1 1h24v24H1ZM9 1v24M17 1v24M1 9h24M1 17h24" stroke="#f2f2f2" strokeWidth="2" />
        </Svg>
      </div>
      <Svg w={28} h={26} className="ml-[21px]">
        <path d="M1 1h26v24H1ZM7 6h14v14H7ZM10 10h8M10 13h8M10 16h8" stroke="#f2f2f2" strokeWidth="2" />
      </Svg>
      <Svg w={27} h={26} className="ml-[43px]">
        <path d="M1 1h25v24H1ZM1 16h13V1M20 1v10h-6" stroke="#f2f2f2" strokeWidth="2" />
      </Svg>
      <div className="ml-[38px] h-[4px] w-[16px] bg-[#f2f2f2]" />
      <div className="ml-[15px] flex h-[8px] w-[199px] items-center rounded-full bg-[#7a7a7a]">
        <div className="ml-[84px] size-[32px] shrink-0 rounded-full bg-[#a0a0a0]" />
      </div>
      <svg width="18" height="18" viewBox="0 0 18 18" className="ml-[14px] shrink-0">
        <path d="M0 9h18M9 0v18" stroke="#f2f2f2" strokeWidth="4" />
      </svg>
      <span className="ml-[33px] mr-[50px] whitespace-nowrap pt-[3px] text-[#e6e6e6]">100%</span>
    </div>
  );
}

function ExcelWindow() {
  return (
    <div className={`absolute left-[60px] top-[142px] flex h-[1744px] w-[2804px] flex-col overflow-hidden rounded-[20px] bg-[#2d2d2d] shadow-[0_0_0_1.5px_#111111,0_30px_70px_rgba(0,0,0,0.6)] ${SANS}`}>
      <TitleBar />
      <Ribbon />
      <Banner />
      <FormulaBar />
      <div className="h-[6px] shrink-0 border-y border-[#8a8a8a] bg-[#e4e4e4]" />
      <Sheet />
      <SheetTabs />
      <StatusBar />
    </div>
  );
}

function BackPage() {
  return (
    <div className="flex h-[2020px] w-[2994px] bg-[#fbbc14] [font-family:'Liberation_Sans',sans-serif]">
      <div className="w-[783px] shrink-0 bg-[#414141]" />
      <div className="w-[43px] shrink-0" />
      <div className="flex w-[1593px] shrink-0 flex-col justify-between border-x-[18px] border-white bg-[#e0e0e0] pl-[60px] pr-[21px]">
        <div className="mt-[51px] flex h-[62px] items-center justify-between rounded-[8px] border-b-2 border-white bg-[#f6f6f6] pl-[20px] pr-[20px]">
          <span className="text-[32px] font-bold text-[#ffab3a]">Amortization Schedule and Journal Entries</span>
          <div className="flex size-[40px] items-center justify-center rounded-full bg-[#fac06f] text-[30px] font-bold text-white">?</div>
        </div>
        <div className="mb-[-8px]">
          {BACK_ROWS.map((row) => (
            <div key={row[0]} className="grid h-[66px] grid-cols-[178px_166px_158px_170px_162px_153px_170px_160px_160px] border-b-2 border-[#d2d2d2] bg-[#f6f6f6] text-[24px] text-[#111111]">
              {row.map((v, i) => (
                <div key={i} className="flex items-center justify-center border-r-2 border-[#dadada]">{v}</div>
              ))}
            </div>
          ))}
        </div>
      </div>
    </div>
  );
}

export default function App() {
  return (
    <div className="relative h-[2020px] w-[2994px] overflow-hidden">
      <BackPage />
      <ExcelWindow />
    </div>
  );
}
